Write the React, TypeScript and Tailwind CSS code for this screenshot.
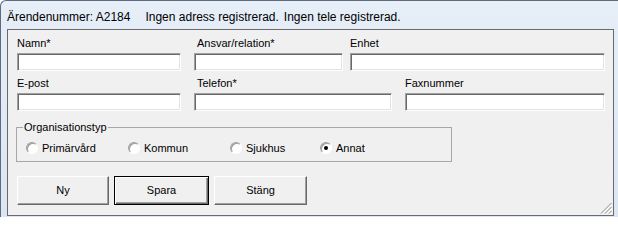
import React from "react";

const font = { fontFamily: '"Liberation Sans", Arial, sans-serif' };

const inputCls =
  "h-[18px] bg-white border border-t-[#a0a0a0] border-l-[#a0a0a0] border-r-white border-b-white shadow-[inset_1px_1px_0_#696969,inset_-1px_-1px_0_#e3e3e3]";

const Field = ({
  label,
  width,
  indent = false,
}: {
  label: string;
  width: string;
  indent?: boolean;
}) => (
  <div className={`flex flex-col ${width}`}>
    <span className={`h-[14px] leading-[14px] text-[11px] text-black ${indent ? "pl-[3px]" : ""}`}>
      {label}
    </span>
    <div className={`mt-[3px] ${inputCls}`} />
  </div>
);

const Radio = ({ label, checked = false, width }: { label: string; checked?: boolean; width: string }) => (
  <div className={`flex items-center h-[16px] ${width}`}>
    <div className="w-[12px] h-[12px] rounded-full bg-white border border-t-[#a0a0a0] border-l-[#a0a0a0] border-r-white border-b-white shadow-[inset_1px_1px_0_#9a9a9a] flex items-center justify-center">
      {checked && <div className="w-[4px] h-[4px] rounded-full bg-black" />}
    </div>
    <span className="ml-[4px] text-[11px] leading-[14px] text-black">{label}</span>
  </div>
);

const Button = ({ label, width, isDefault = false }: { label: string; width: string; isDefault?: boolean }) => (
  <button
    className={`h-[29px] ${width} text-[11px] text-black bg-[#f0f0f0] ${
      isDefault
        ? "border border-black shadow-[inset_1px_1px_0_#ffffff,inset_-1px_-1px_0_#696969,inset_-2px_-2px_0_#a0a0a0]"
        : "border border-t-white border-l-white border-r-[#696969] border-b-[#696969] shadow-[inset_-1px_-1px_0_#a0a0a0]"
    }`}
  >
    {label}
  </button>
);

export default function App() {
  return (
    <div
      className="w-[618px] h-[217px] overflow-hidden bg-gradient-to-b from-[#e6eef8] to-[#dbe6f3] border-t border-l border-[#5f6b7a] rounded-tl-[6px]"
      style={font}
    >
      <div className="h-[28px] pl-[6px] pt-[9px] flex text-[12px] leading-[14px] text-black whitespace-nowrap">
        <span>Ärendenummer: A2184</span>
        <span className="ml-[15px]">Ingen adress registrerad.</span>
        <span className="ml-[5px]">Ingen tele registrerad.</span>
      </div>

      <div className="relative ml-[6px] w-[607px] h-[187px] bg-[#f0f0f0] border border-[#6a6a6a] pl-[9px] pt-[6px]">
        <div className="flex">
          <Field label="Namn*" width="w-[164px]" />
          <div className="ml-[13px]">
            <Field label="Ansvar/relation*" width="w-[149px]" indent />
          </div>
          <div className="ml-[7px]">
            <Field label="Enhet" width="w-[255px]" />
          </div>
        </div>

        <div className="flex mt-[5px]">
          <Field label="E-post" width="w-[164px]" />
          <div className="ml-[13px]">
            <Field label="Telefon*" width="w-[198px]" indent />
          </div>
          <div className="ml-[13px]">
            <Field label="Faxnummer" width="w-[200px]" />
          </div>
        </div>

        <fieldset className="ml-[-1px] mt-[9px] w-[436px] border border-[#a7a7a7] pl-[9px] pb-[5px]">
          <legend className="ml-[-3px] px-[1px] text-[11px] leading-[14px] text-black">Organisationstyp</legend>
          <div className="flex mt-[6px]">
            <Radio label="Primärvård" width="w-[102px]" />
            <Radio label="Kommun" width="w-[102px]" />
            <Radio label="Sjukhus" width="w-[90px]" />
            <Radio label="Annat" checked width="w-[80px]" />
          </div>
        </fieldset>

        <div className="flex gap-[5px] mt-[14px]">
          <Button label="Ny" width="w-[92px]" />
          <Button label="Spara" width="w-[95px]" isDefault />
          <Button label="Stäng" width="w-[93px]" />
        </div>

        <svg className="absolute right-[1px] bottom-[1px]" width="12" height="12" viewBox="0 0 12 12">
          <g stroke="#8a8a8a" strokeWidth="1">
            <line x1="11.5" y1="1" x2="1" y2="11.5" />
            <line x1="11.5" y1="5" x2="5" y2="11.5" />
            <line x1="11.5" y1="9" x2="9" y2="11.5" />
          </g>
          <g stroke="#ffffff" strokeWidth="1">
            <line x1="11.5" y1="2.5" x2="2.5" y2="11.5" />
            <line x1="11.5" y1="6.5" x2="6.5" y2="11.5" />
            <line x1="11.5" y1="10.5" x2="10.5" y2="11.5" />
          </g>
        </svg>
      </div>
    </div>
  );
}
